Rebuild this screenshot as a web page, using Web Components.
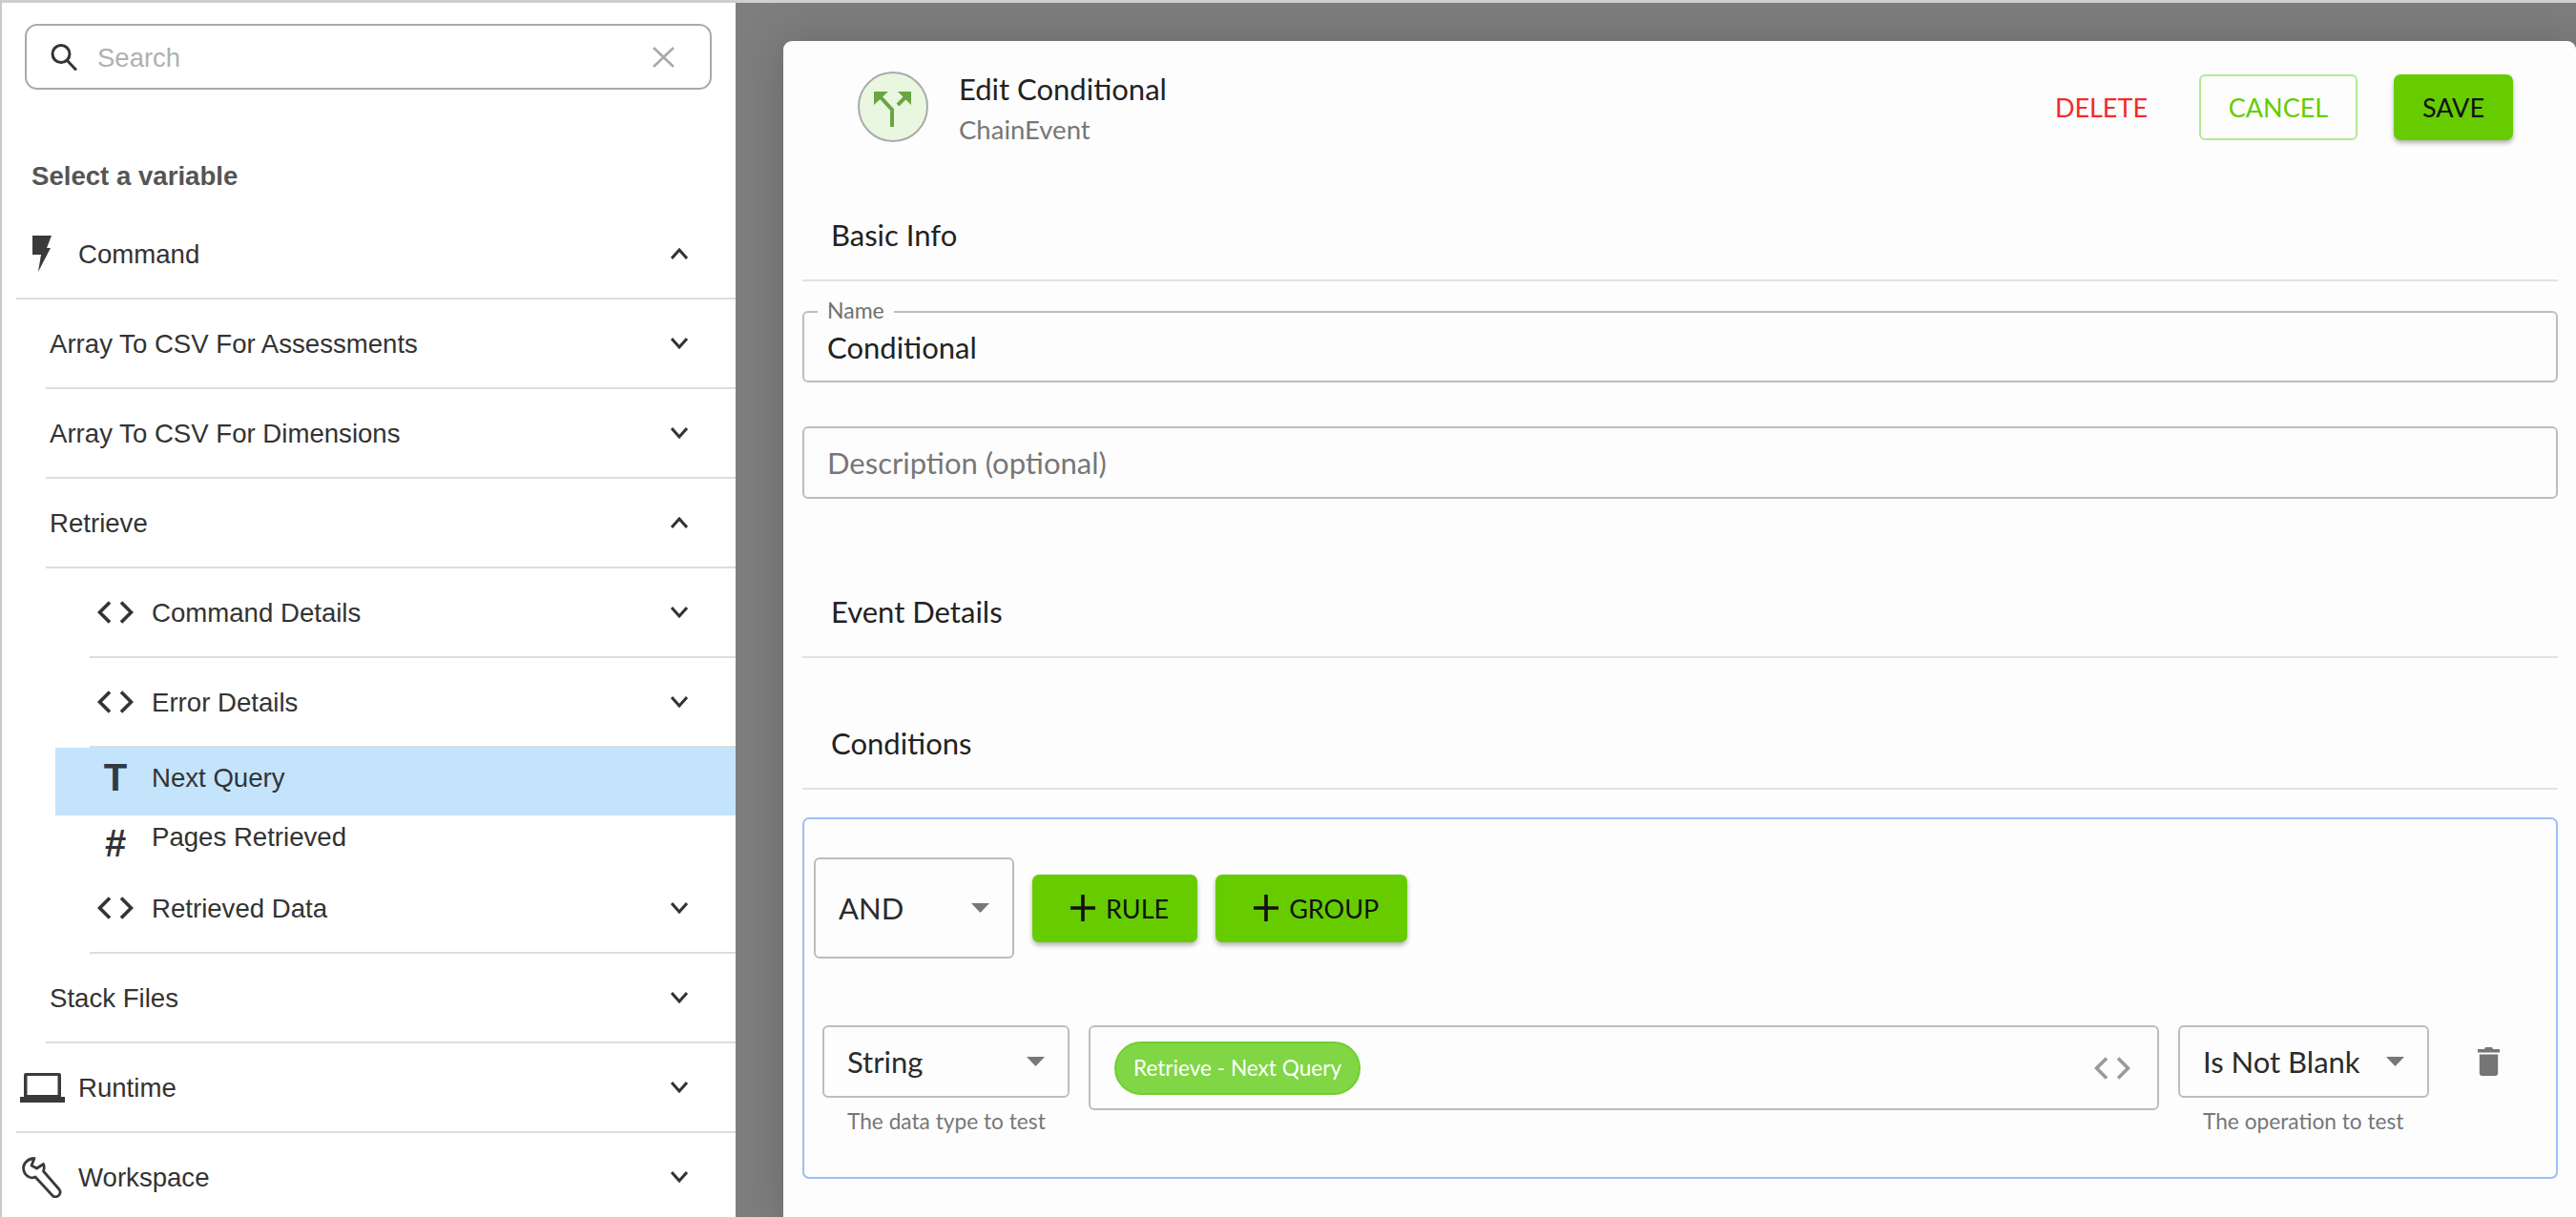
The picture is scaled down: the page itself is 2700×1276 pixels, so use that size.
<!DOCTYPE html>
<html>
<head>
<meta charset="utf-8">
<title>Edit Conditional</title>
<style>
  html, body { margin: 0; padding: 0; overflow: hidden; background: #fff; }
</style>
</head>
<body>
<app-shell>
  <variable-panel slot="side">
    <tree-row level="0" icon="bolt" chevron="up">Command</tree-row>
    <tree-row level="1" chevron="down">Array To CSV For Assessments</tree-row>
    <tree-row level="1" chevron="down">Array To CSV For Dimensions</tree-row>
    <tree-row level="1" chevron="up">Retrieve</tree-row>
    <tree-row level="2" icon="code" chevron="down">Command Details</tree-row>
    <tree-row level="2" icon="code" chevron="down">Error Details</tree-row>
    <tree-row level="2" icon="T" kind="selected">Next Query</tree-row>
    <tree-row level="2" icon="#" kind="leaf">Pages Retrieved</tree-row>
    <tree-row level="2" icon="code" chevron="down">Retrieved Data</tree-row>
    <tree-row level="1" chevron="down">Stack Files</tree-row>
    <tree-row level="0" icon="laptop" chevron="down">Runtime</tree-row>
    <tree-row level="0" icon="wrench" chevron="down">Workspace</tree-row>
  </variable-panel>
  <edit-modal slot="main">
    <section-head style="margin-top:51px">Basic Info</section-head>
    <text-field label="Name" style="margin-top:31px">Conditional</text-field>
    <text-field placeholder style="margin-top:46px;height:76px">Description (optional)</text-field>
    <section-head style="margin-top:72px">Event Details</section-head>
    <section-head style="margin-top:43px">Conditions</section-head>
    <rule-group style="margin-top:29px">
      <select-field slot="combinator" tall style="width:210px">AND</select-field>
      <green-button slot="actions" icon="plus">RULE</green-button>
      <green-button slot="actions" icon="plus">GROUP</green-button>
      <select-field slot="rule" helper="The data type to test" style="width:259px">String</select-field>
      <variable-input slot="rule">Retrieve - Next Query</variable-input>
      <select-field slot="rule" helper="The operation to test" style="width:263px">Is Not Blank</select-field>
      <trash-button slot="rule"></trash-button>
    </rule-group>
  </edit-modal>
</app-shell>

<script>
const ICONS = {
  search: `<svg width="28" height="28" viewBox="0 0 28 28" fill="none" stroke="#333" stroke-width="3"><circle cx="11" cy="10.5" r="9"/><path d="M17 17l10 10.5"/></svg>`,
  clear: `<svg width="23" height="22" viewBox="0 0 23 22" fill="none" stroke="#a9a9a9" stroke-width="2.6"><path d="M1 1l21 20M22 1L1 21"/></svg>`,
  up: `<svg width="18" height="12" viewBox="0 0 18 12" fill="none" stroke="#333" stroke-width="3"><path d="M1 11l8-9 8 9"/></svg>`,
  down: `<svg width="18" height="12" viewBox="0 0 18 12" fill="none" stroke="#333" stroke-width="3"><path d="M1 1l8 9 8-9"/></svg>`,
  bolt: `<svg width="20" height="38" viewBox="0 0 20 38" fill="#3a3a3a"><path d="M0 0h20l-5 13h4L6 38l3-18H0z"/></svg>`,
  code: `<svg width="38" height="24" viewBox="0 0 38 24" fill="none" stroke="currentColor" stroke-width="3.6"><path d="M13 1.500L2.500 12 13 22.500M25 1.500L35.500 12 25 22.500"/></svg>`,
  laptop: `<svg width="47" height="31" viewBox="0 0 47 31" fill="#3a3a3a"><path d="M6 0h35a2 2 0 0 1 2 2v23H4V2a2 2 0 0 1 2-2zm1.500 3v20h32V3z"/><path d="M0 25h47v6H0z"/></svg>`,
  wrench: `<svg width="42" height="43" viewBox="0 0 42 43" fill="none" stroke="#3a3a3a" stroke-width="2.800" stroke-linejoin="round"><path d="M13 1.500C7 1.500 2 6 1.500 11c0 5 3 9 7 10.500 2 .5 4 .5 5.500-.5L32 40.500c2 2 4 2 6.500 0 2-2 2-4.500 .5-6.500L22.500 15c1-2.500 1-5 0-7.500L15.500 12 10 9z"/></svg>`,
  plus: `<svg width="26" height="28" viewBox="0 0 26 28" fill="none" stroke="#111" stroke-width="3.600"><path d="M13 0v28M0 14h26"/></svg>`,
  caret: `<svg width="19" height="10" viewBox="0 0 19 10" fill="#777"><path d="M0 0h19l-9.500 10z"/></svg>`,
  trash: `<svg width="23" height="30" viewBox="0 0 23 30" fill="#757575"><path d="M8 0h7l1 2h7v3.500H0V2h7zM1.800 7.500h19.400V27a3 3 0 0 1-3 3H4.800a3 3 0 0 1-3-3z"/></svg>`,
  branch: `<svg width="74" height="74" viewBox="0 0 74 74" fill="none"><path d="M36 58V40L24 27M42 35l9-9" stroke="#6aa53f" stroke-width="4"/><path d="M17 21h15L17 35zM56 21H42l14 14z" fill="#6aa53f"/></svg>`
};

class AppShell extends HTMLElement {
  constructor() {
    super();
    this.attachShadow({ mode: 'open' });
  }
  connectedCallback() {
    this.shadowRoot.innerHTML = `
      <style>
        :host {
          display: flex; width: 2700px; height: 1276px; box-sizing: border-box;
          border-top: 3px solid #cfcfcf; border-left: 2px solid #c8c8c8;
          overflow: hidden; background: #7e7e7e;
        }
        .side { width: 769px; flex: none; background: #fff; }
        .main { flex: 1; min-width: 0; padding: 40px 0 0 50px; }
      </style>
      <div class="side"><slot name="side"></slot></div>
      <div class="main"><slot name="main"></slot></div>
    `;
  }
}
customElements.define('app-shell', AppShell);

class VariablePanel extends HTMLElement {
  constructor() {
    super();
    this.attachShadow({ mode: 'open' });
  }
  connectedCallback() {
    this.shadowRoot.innerHTML = `
      <style>
        :host { display: block; font-family: "Liberation Sans", Arial, sans-serif; color: #333; }
        .search {
          margin: 22px 0 0 24px; width: 720px; height: 69px; box-sizing: border-box;
          border: 2px solid #aaa; border-radius: 13px;
          display: flex; align-items: center; padding: 0 37px 0 25px;
        }
        .search .ph { flex: 1; margin-left: 21px; padding-top: 2px; font-size: 27.5px; color: #b0b0b0; }
        .search svg { display: block; }
        h3 {
          margin: 0; height: 126px; box-sizing: border-box; padding: 74px 0 0 31px;
          font-size: 27.6px; line-height: 34px; font-weight: 700; color: #555;
        }
      </style>
      <div class="search">${ICONS.search}<span class="ph">Search</span>${ICONS.clear}</div>
      <h3>Select a variable</h3>
      <slot></slot>
    `;
  }
}
customElements.define('variable-panel', VariablePanel);

class TreeRow extends HTMLElement {
  constructor() {
    super();
    this.attachShadow({ mode: 'open' });
  }
  connectedCallback() {
    const icon = this.getAttribute('icon');
    const chevron = this.getAttribute('chevron');
    let glyph = '';
    if (icon === 'T' || icon === '#') glyph = `<span class="letter">${icon}</span>`;
    else if (icon) glyph = ICONS[icon];
    this.shadowRoot.innerHTML = `
      <style>
        :host {
          display: block; height: 94px; box-sizing: border-box;
          border-bottom: 2px solid #ddd; font-size: 27.6px; color: #333;
        }
        :host([level="0"]) { margin-left: 15px; }
        :host([level="1"]) { margin-left: 46px; }
        :host([level="2"]) { margin-left: 92px; }
        :host([kind="selected"]) {
          margin-left: 56px; height: 71px; border: 0; background: #c3e4fb;
          padding: 0 0 9px 36px;
        }
        :host([kind="leaf"]) { height: 51px; border: 0; padding-bottom: 7px; }
        .row { height: 100%; display: flex; align-items: center; padding-right: 50px; }
        :host([level="1"]) .row { padding-left: 4px; }
        .ico { flex: none; width: 54px; margin-right: 11px; display: flex; justify-content: center; align-items: center; color: #333; }
        .ico svg { display: block; }
        .text { flex: 1; white-space: nowrap; padding-top: 2px; }
        .chev { flex: none; display: block; }
        .chev svg { display: block; }
        .letter { font-weight: 700; font-size: 40px; line-height: 40px; color: #2f3a44; }
        :host([icon="#"]) .letter { color: #333; position: relative; top: 7px; }
      </style>
      <div class="row">
        ${icon ? `<span class="ico">${glyph}</span>` : ''}
        <span class="text"><slot></slot></span>
        ${chevron ? `<span class="chev">${ICONS[chevron]}</span>` : ''}
      </div>
    `;
  }
}
customElements.define('tree-row', TreeRow);

class EditModal extends HTMLElement {
  constructor() {
    super();
    this.attachShadow({ mode: 'open' });
  }
  connectedCallback() {
    this.shadowRoot.innerHTML = `
      <style>
        :host {
          display: block; height: 1240px; box-sizing: border-box;
          background: #fdfdfd; border-radius: 9px 9px 0 0;
          box-shadow: 0 0 50px rgba(0,0,0,.18);
          padding: 0 19px 0 20px; font-family: Lato, sans-serif; color: #222;
        }
        header { display: flex; align-items: flex-start; padding: 32px 47px 0 58px; height: 106px; box-sizing: border-box; }
        .badge {
          width: 74px; height: 74px; box-sizing: border-box; flex: none; border-radius: 50%;
          border: 2px solid #aaa; background: #e9f6e0; display: flex; align-items: center; justify-content: center;
        }
        .badge svg { display: block; margin: -2px; }
        .titles { margin-left: 32px; flex: 1; }
        .title { font-size: 31px; line-height: 36px; }
        .sub { font-size: 27.5px; line-height: 30px; color: #777; margin-top: 10px; }
        .actions { display: flex; align-items: flex-start; padding-top: 3px; font-size: 27px; }
        .delete { color: #f52a2a; line-height: 69px; margin-right: 54px; }
        .cancel {
          box-sizing: border-box; height: 69px; width: 166px; text-align: center; border: 2px solid #b3e993; border-radius: 6px;
          color: #66cc00; line-height: 65px; margin-right: 38px;
        }
        green-button { padding: 0 30px; }
      </style>
      <header>
        <div class="badge">${ICONS.branch}</div>
        <div class="titles">
          <div class="title">Edit Conditional</div>
          <div class="sub">ChainEvent</div>
        </div>
        <div class="actions">
          <span class="delete">DELETE</span>
          <span class="cancel">CANCEL</span>
          <green-button tall>SAVE</green-button>
        </div>
      </header>
      <slot></slot>
    `;
  }
}
customElements.define('edit-modal', EditModal);

class SectionHead extends HTMLElement {
  constructor() {
    super();
    this.attachShadow({ mode: 'open' });
  }
  connectedCallback() {
    this.shadowRoot.innerHTML = `
      <style>
        :host {
          display: flex; align-items: center; height: 95px; box-sizing: border-box;
          border-bottom: 2px solid #e2e2e2; padding: 0 0 2px 30px;
          font-size: 31px; color: #222;
        }
      </style>
      <slot></slot>
    `;
  }
}
customElements.define('section-head', SectionHead);

class TextField extends HTMLElement {
  constructor() {
    super();
    this.attachShadow({ mode: 'open' });
  }
  connectedCallback() {
    const label = this.getAttribute('label');
    this.shadowRoot.innerHTML = `
      <style>
        :host {
          display: flex; align-items: center; position: relative; height: 75px; box-sizing: border-box;
          border: 2px solid #bdbdbd; border-radius: 6px; padding-left: 24px;
          font-size: 31px; color: #222;
        }
        :host([placeholder]) { color: #777; }
        .label {
          position: absolute; top: -16px; left: 14px; padding: 0 10px; background: #fdfdfd;
          font-size: 23px; line-height: 26px; color: #6f6f6f;
        }
      </style>
      ${label ? `<span class="label">${label}</span>` : ''}
      <slot></slot>
    `;
  }
}
customElements.define('text-field', TextField);

class SelectField extends HTMLElement {
  constructor() {
    super();
    this.attachShadow({ mode: 'open' });
  }
  connectedCallback() {
    const helper = this.getAttribute('helper');
    this.shadowRoot.innerHTML = `
      <style>
        :host { display: block; flex: none; font-size: 31px; color: #2b2b2b; }
        .box {
          display: flex; align-items: center; justify-content: space-between;
          height: 76px; box-sizing: border-box; border: 2px solid #bdbdbd; border-radius: 6px;
          padding: 0 24px;
        }
        :host([tall]) .box { height: 106px; }
        .box svg { display: block; }
        .help { margin: 12px 0 0 26px; font-size: 22.7px; line-height: 26px; color: #777; white-space: nowrap; }
      </style>
      <div class="box"><span><slot></slot></span>${ICONS.caret}</div>
      ${helper ? `<div class="help">${helper}</div>` : ''}
    `;
  }
}
customElements.define('select-field', SelectField);

class GreenButton extends HTMLElement {
  constructor() {
    super();
    this.attachShadow({ mode: 'open' });
  }
  connectedCallback() {
    const icon = this.getAttribute('icon');
    this.shadowRoot.innerHTML = `
      <style>
        :host {
          display: inline-flex; align-items: center; flex: none; height: 71px; box-sizing: border-box;
          background: #66cc00; border-radius: 7px; padding: 0 31px;
          box-shadow: 0 3px 5px rgba(0,0,0,.3); font-size: 27px; color: #111;
        }
        :host([icon]) { padding: 0 30px 0 40px; }
        :host([tall]) { height: 69px; }
        svg { display: block; margin-right: 11px; }
      </style>
      ${icon ? ICONS[icon] : ''}
      <slot></slot>
    `;
  }
}
customElements.define('green-button', GreenButton);

class RuleGroup extends HTMLElement {
  constructor() {
    super();
    this.attachShadow({ mode: 'open' });
  }
  connectedCallback() {
    this.shadowRoot.innerHTML = `
      <style>
        :host {
          display: block; height: 379px; box-sizing: border-box;
          border: 2px solid #9dbef5; border-radius: 7px; padding: 40px 0 0 10px;
        }
        .bar { display: flex; align-items: center; gap: 19px; }
        .rule { display: flex; align-items: flex-start; gap: 20px; margin: 70px 0 0 9px; }
      </style>
      <div class="bar"><slot name="combinator"></slot><slot name="actions"></slot></div>
      <div class="rule"><slot name="rule"></slot></div>
    `;
  }
}
customElements.define('rule-group', RuleGroup);

class VariableInput extends HTMLElement {
  constructor() {
    super();
    this.attachShadow({ mode: 'open' });
  }
  connectedCallback() {
    this.shadowRoot.innerHTML = `
      <style>
        :host {
          display: flex; align-items: center; justify-content: space-between; flex: none; width: 1122px; height: 89px;
          box-sizing: border-box; border: 2px solid #bdbdbd; border-radius: 6px; padding: 0 28px 0 25px;
        }
        .pill {
          display: block; box-sizing: border-box; height: 56px; padding: 0 18px; border-radius: 28px;
          background: #80d644; border: 2px solid #70cf30; color: #fff; font-size: 22.600px; line-height: 52px; white-space: nowrap;
        }
        .code { color: #999; display: block; }
        .code svg { display: block; }
      </style>
      <span class="pill"><slot></slot></span>
      <span class="code">${ICONS.code}</span>
    `;
  }
}
customElements.define('variable-input', VariableInput);

class TrashButton extends HTMLElement {
  constructor() {
    super();
    this.attachShadow({ mode: 'open' });
  }
  connectedCallback() {
    this.shadowRoot.innerHTML = `
      <style>
        :host { display: block; flex: none; margin: 23px 0 0 31px; }
        svg { display: block; }
      </style>
      ${ICONS.trash}
    `;
  }
}
customElements.define('trash-button', TrashButton);
</script>
</body>
</html>
